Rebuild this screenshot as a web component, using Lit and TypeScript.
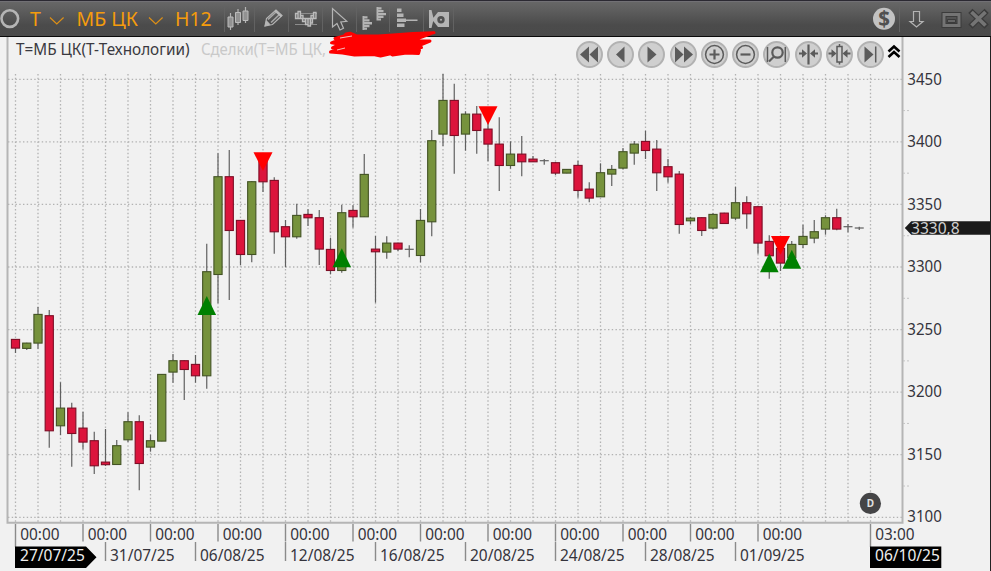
import { LitElement, html, svg, css } from "lit";
import { customElement } from "lit/decorators.js";

// One candle: direction (u = up, d = down, n = flat), high, body top, body bottom, low
type Candle = [string, number, number, number, number];

const FIRST_X = 15.5;
const STEP = 11.25;

const candles: Candle[] = [
  ["d", 339, 339, 348.3, 353], ["u", 342.7, 342.7, 348.6, 350], ["u", 307, 314, 343.3, 348.7],
  ["d", 310, 315.3, 431, 447.7], ["u", 382.3, 407.7, 426, 435], ["d", 402.7, 407.7, 433.7, 466.7],
  ["d", 411.7, 427.7, 442.3, 449.3], ["d", 431.7, 440.3, 466, 474], ["d", 429, 461.7, 464.9, 466],
  ["u", 440, 445.3, 464.7, 464.7], ["u", 412.3, 421.3, 440, 442], ["d", 415.3, 421.3, 463.7, 490.3],
  ["u", 434.7, 440.3, 447.3, 451.7], ["u", 374, 374, 441.3, 441.3], ["u", 354, 360.3, 372.3, 382.7],
  ["d", 360.3, 360.3, 369.7, 400], ["d", 355, 364, 376, 382.7], ["u", 243.7, 271.3, 376, 388.7],
  ["u", 153.3, 176.3, 274.7, 303.3], ["d", 150, 176.3, 230.7, 300], ["d", 220, 220, 254.7, 265],
  ["u", 181.3, 181.3, 254.7, 262.3], ["d", 153, 155, 182, 192], ["d", 177.3, 180, 232, 253.7],
  ["d", 220, 226.3, 237, 267.3], ["u", 203.7, 215, 237, 238.7], ["d", 209.3, 214, 218, 226],
  ["d", 210, 217.3, 249.3, 265], ["d", 237.7, 249, 270.7, 274.3], ["u", 204.7, 212.3, 270.7, 272.7],
  ["d", 205.3, 210, 217, 227.7], ["u", 154, 174, 217, 217], ["d", 236, 248.7, 252, 302.7],
  ["u", 236.3, 242.7, 252.3, 258.7], ["d", 242.7, 242.7, 249.3, 251], ["n", 245.3, 249.3, 249.3, 257.3],
  ["u", 209, 220, 255.7, 262.3], ["u", 130, 140.3, 222, 236.3], ["u", 73.7, 100, 134.3, 146],
  ["d", 83.7, 100, 135.7, 173.7], ["u", 111.3, 113.7, 134.3, 150.7], ["d", 106, 113.7, 130.7, 153.7],
  ["d", 123, 128.7, 144.3, 161.3], ["d", 117.3, 143.7, 165.7, 191], ["u", 141.3, 153.7, 165.7, 168.7],
  ["d", 136, 153.7, 162, 176.3], ["d", 156, 158.7, 162, 162], ["n", 159, 160.7, 160.7, 164.7],
  ["d", 162, 162.3, 173.3, 175], ["u", 169, 169, 173.3, 173.3], ["d", 160.7, 165, 190.7, 197.7],
  ["d", 182.3, 188.7, 198.3, 202.3], ["u", 163.3, 172.3, 197, 197], ["u", 165, 169, 174.3, 186],
  ["u", 148, 151.3, 168.3, 169.5], ["u", 141, 143.7, 153.3, 164.7], ["d", 130.7, 141, 150.7, 159],
  ["d", 140, 148.7, 173, 191], ["d", 159, 166.3, 177, 182.7], ["d", 171, 173.7, 224.7, 233.7],
  ["u", 217, 217.7, 221, 224], ["d", 217.3, 217.3, 230.7, 236], ["u", 213.3, 214, 228.3, 229.5],
  ["d", 212.7, 212.7, 223.7, 223.7], ["u", 186.7, 202.3, 218.3, 220], ["d", 196.3, 202.3, 214, 228.7],
  ["d", 206.3, 206.3, 243.3, 253.7], ["d", 235.3, 241, 256, 278.7], ["d", 246, 248, 263.3, 271],
  ["u", 241, 244, 258, 262], ["u", 224.7, 236, 244.7, 248.3], ["u", 220, 231.3, 238.3, 243.3],
  ["u", 215.3, 217.3, 229.3, 234.7], ["d", 208.7, 217.3, 229.3, 230.3], ["n", 224, 226.7, 226.7, 232.3],
  ["n", 226.7, 228, 228, 230],
];

const sells = [[263, 152.3], [488, 106.3], [780.5, 236]];
const buys = [[206.8, 315], [341.8, 267.3], [769.3, 272.3], [791.8, 268.7]];
const prices = [3450, 3400, 3350, 3300, 3250, 3200, 3150, 3100];
const hourTicks = [0, 6, 12, 18, 24, 30, 36, 42, 48, 54, 60, 66];
const dates: [number, string][] = [
  [8, "31/07/25"], [16, "06/08/25"], [24, "12/08/25"], [32, "16/08/25"],
  [40, "20/08/25"], [48, "24/08/25"], [56, "28/08/25"], [64, "01/09/25"],
];

const xAt = (i: number) => FIRST_X + STEP * i;
const priceY = (i: number) => 79.3 + 62.57 * i;

@customElement("tool-bar")
class ToolBar extends LitElement {
  static styles = css`
    :host { display: block; height: 37px; }
    .bar {
      box-sizing: border-box; height: 37px; display: flex; align-items: stretch;
      border-top: 1px solid #2b2932; border-bottom: 1px solid #0a0a0a;
      background: linear-gradient(#77757c 0, #666 1.5px, #5f5f5f 8px, #4b4b4b 24px, #4a4a4a 100%);
      font: 19.5px "Noto Sans", sans-serif; color: #f59c0c;
    }
    .cell { box-sizing: border-box; flex: none; display: flex; }
    .cell svg { display: block; flex: none; }
    .sep { flex: none; width: 1px; height: 26px; margin-top: 5px; background: #626262; }
    .label { line-height: 35px; white-space: pre; }
    .circle { width: 30px; } .t { width: 18px; } .chev { width: 28.5px; }
    .name { width: 71.5px; } .chev2 { width: 27px; } .period { width: 49px; }
    .grow { flex: 1; }
    .chevline { fill: none; stroke: #dc8f17; stroke-width: 1.2; }
    .g { fill: #b4b4b4; } .dim { fill: #929292; stroke: #bcbcbc; stroke-width: 1; }
    .line { fill: none; stroke: #b4b4b4; stroke-width: 1.2; }
    .soft { fill: none; stroke: #8c8c8c; stroke-width: 1; }
    .dark { fill: #505050; }
    .win { fill: none; stroke: #747474; stroke-width: 3; }
    .cross { fill: none; stroke: #747474; stroke-width: 3.8; }
    .edge { fill: none; stroke: #3b3b3b; stroke-width: 5; }
    .cross-edge { fill: none; stroke: #3b3b3b; stroke-width: 6; stroke-linecap: square; }
    .dollar { fill: #505050; font: bold 20.5px "Noto Sans", sans-serif; text-anchor: middle; }
  `;
  // Each icon is drawn in bar coordinates through a window starting at x
  icon(x: number, w: number, body: unknown) {
    return html`<svg width=${w} height="35" viewBox="${x} 1 ${w} 35">${body}</svg>`;
  }
  render() {
    return html`<div class="bar">
      <div class="cell circle">${this.icon(0, 30, svg`<circle cx="9.8" cy="18.6" r="8.3" fill="none" stroke="#b5b5b5" stroke-width="2.6"/>`)}</div>
      <div class="cell t"><span class="label">T</span></div>
      <div class="cell chev">${this.icon(48, 28.5, svg`<path class="chevline" d="M50 17.5l6.8 6.5 6.8-6.5"/>`)}</div>
      <div class="cell name"><span class="label">МБ ЦК</span></div>
      <div class="cell chev2">${this.icon(148, 27, svg`<path class="chevline" d="M149 17.5l6.8 6.5 6.8-6.5"/>`)}</div>
      <div class="cell period"><span class="label">H12</span></div>
      <i class="sep"></i>
      ${this.icon(225, 29, svg`<path class="line" d="M230.5 13v17M238 9v16M245.5 7v16"/>
        <path class="dim" d="M228 17h5v10h-5zM235.5 12.5h5v10h-5zM243 11h5v9.500h-5z"/>`)}
      <i class="sep"></i>
      ${this.icon(255, 33, svg`<path class="line" d="M265 26l1.500-7.500 9.500-8.500 6 5.500-9.500 9z" fill="#777"/>
        <path d="M268 19.500l8.500-8M271 22.500l8.500-8" stroke="#a8a8a8" stroke-width="1.600"/><path d="M275 10.500l6.500 6" stroke="#b8b8b8" stroke-width="2"/><path class="g" d="M264.500 26.500l1.800-6.500 4.200 4.500z"/>`)}
      <i class="sep"></i>
      ${this.icon(289, 33, svg`<path class="soft" d="M295 13.500h22M295 24.500h22"/>
        <path fill="#777" stroke="#bcbcbc" stroke-width="1.300" d="M295.500 18.500v-5h2.500v-2h2.500v4h2.500v3h8v-3h2.500v-3h2.500v6zM302.500 18.500v3h3v3h2.500v1.500h2.500v-3h2v-4.500M298 13v5M300.500 15v3M305.500 18.500v3M308 18.500v5M310.500 18.500v4M313.500 13v5"/>`)}
      <i class="sep"></i>
      ${this.icon(323, 32.5, svg`<path class="line" d="M332.500 8.500V27l4.500-3.500 3 6.500 3.500-1.800-2.700-6.200 6-.7z"/>`)}
      <i class="sep"></i>
      ${this.icon(356.5, 32.5, svg`<path class="g" d="M362 16h1.800v14H362zM363 16.300h4v2.300h-4zM363 19.200h6v2.300h-6zM363 22.100h8.500v2.300H363zM363 25h6v2.300h-6zM363 27.800h3.500v2h-3.500zM376 7h1.800v13.500H376zM377 7.300h4v2.200h-4zM377 10.100h6v2.200h-6zM377 13h8.500v2.200H377zM377 15.800h6V18h-6zM377 18.500h3.500v2H377z"/>`)}
      <i class="sep"></i>
      ${this.icon(390, 33, svg`<path class="g" d="M397 8.500h4.500v3.500H397zM397 13.500h6.500V17H397zM397 18.500h9v3.500h-9zM406 19.500h11.500V21H406zM397 23.500h7.500V27H397z"/>`)}
      <i class="sep"></i>
      ${this.icon(424, 29, svg`<path class="g" d="M429 10h2.500l2.200 9-2.200 9H429zM438 12h11v15h-11l-6-7.500z"/><circle class="dark" cx="441" cy="19.700" r="3.700"/><circle class="g" cx="441" cy="19.700" r="1"/>`)}
      <i class="sep"></i>
      <div class="grow"></div>
      ${this.icon(870, 29, svg`<circle cx="884" cy="18.700" r="11" fill="#c2c2c2"/><text class="dollar" x="884" y="26">$</text>`)}
      <i class="sep"></i>
      ${this.icon(900, 91, svg`<path class="line" d="M913.500 11.500h6v10h3.500l-6.500 5.500-6.500-5.500h3.500z"/>
        <path class="edge" d="M944 14.500h15v11h-15z"/><path class="win" d="M944 14.500h15v11h-15z"/><path d="M947.500 19.500h8v3h-8z" fill="#666" stroke="#3b3b3b"/>
        <path class="cross-edge" d="M972.500 13l12 11.500M984.500 13L972.500 24.500"/><path class="cross" d="M971.500 12l14 13.500M985.500 12L971.500 25.500"/>`)}
    </div>`;
  }
}

@customElement("nav-buttons")
class NavButtons extends LitElement {
  static styles = css`
    :host { display: flex; align-items: center; gap: 4.25px; }
    .btn { width: 27px; height: 27px; flex: none; display: block; }
    .disc { fill: #cfcfcf; stroke: #b2b2b2; stroke-width: 2; }
    .solid { fill: #5b5b5b; } .line { fill: none; stroke: #5b5b5b; stroke-width: 1.5; }
    .thick { fill: none; stroke: #5b5b5b; stroke-width: 2.2; }
    .up { display: block; margin-left: -1.5px; margin-top: -6px; }
    .chev { fill: none; stroke: #000; stroke-width: 2.6; }
  `;
  glyphs = [
    svg`<path class="solid" d="M13 5.500v16L4 13.500zM22 5.500v16L13.500 13.500z"/>`,
    svg`<path class="solid" d="M17.500 5.500v16L9 13.500z"/>`,
    svg`<path class="solid" d="M9.500 5.500v16L18.500 13.500z"/>`,
    svg`<path class="solid" d="M5 5.500v16L13.500 13.500zM14 5.500v16L23 13.500z"/>`,
    svg`<circle class="line" cx="13.500" cy="13.500" r="8.900"/><path class="thick" d="M8.500 13.500h10M13.500 8.500v10"/>`,
    svg`<circle class="line" cx="13.500" cy="13.500" r="8.900"/><path class="thick" d="M8.500 13.500h10"/>`,
    svg`<circle class="thick" cx="14.500" cy="11.500" r="5.200"/><path class="thick" d="M11 15.500l-5 5"/><path class="line" d="M4.500 6v15M22.300 6v15"/>`,
    svg`<path class="thick" d="M13.500 3.500v20"/><path class="thick" d="M4 12.500h4M23 12.500h-4"/><path class="solid" d="M7 8.200l5 4.300-5 4.300zM20 8.200l-5 4.300 5 4.300z"/>`,
    svg`<path class="line" fill="#aaa" d="M11 5.500h5v15.500h-5zM13.500 3v2.500M13.500 21v2.500"/><path class="thick" d="M2.500 12.500h4M24.500 12.500h-4"/><path class="solid" d="M5.500 8.200l5 4.300-5 4.300zM21.500 8.200l-5 4.300 5 4.300z"/>`,
    svg`<path class="solid" d="M7.500 5.500v16L16.500 13.500z"/><path class="line" d="M18.700 5.500v16"/>`,
  ];
  render() {
    return html`${this.glyphs.map((g) => html`<svg class="btn" viewBox="0 0 27 27"><circle class="disc" cx="13.500" cy="13.500" r="12.500"/>${g}</svg>`)}
      <svg class="up" width="14" height="14" viewBox="0 0 14 14"><path class="chev" d="M1.500 7.500L7 2.500l5.500 5M1.500 13L7 8l5.500 5"/></svg>`;
  }
}

@customElement("candle-chart")
class CandleChart extends LitElement {
  static styles = css`
    :host { display: block; }
    svg { display: block; font: 15.6px "Noto Sans", sans-serif; }
    text { fill: #35343c; }
    .grid { stroke: #b2b2b2; stroke-width: 1.3; stroke-dasharray: 1.400 2.350; }
    .frame { fill: none; stroke: #b5b5b5; stroke-width: 2; }
    .tick { stroke: #8b8b8b; stroke-width: 1.4; }
    .minor { stroke: #c4c4c4; stroke-dasharray: 2 2; }
    .wick { stroke: #606060; stroke-width: 1.200; }
    .body { stroke-width: 1.1; }
    .u { fill: #76923c; stroke: #435324; }
    .d { fill: #dc143c; stroke: #7d0d25; }
    .sell { fill: #f00; } .buy { fill: #008000; }
    .black { fill: #000; } .tag { fill: #1a1a1a; }
    .light { fill: #eee; } .quote { fill: #d0d0d0; }
    .badge { fill: #444446; }
    .badge-text { fill: #e0e0e0; font: bold 10px "Noto Sans", sans-serif; text-anchor: middle; }
  `;
  label(x: number, y: number, width: number, text: string, tone = "") {
    return svg`<text class=${tone} x=${x} y=${y} textLength=${width} lengthAdjust="spacingAndGlyphs">${text}</text>`;
  }
  render() {
    const dash = (d: string) => svg`<path class="grid" d=${d}/>`;
    return html`<svg width="991" height="534" viewBox="0 37 991 534">
      ${Array.from({ length: 39 }, (_, i) => dash(`M${xAt(i * 2)} 74V522`))}
      ${prices.map((_, i) => dash(`M8 ${priceY(i)}H902`))}
      <path class="frame" d="M7.500 37V522.700H902.500V37"/>
      ${prices.slice(1).map((_, i) => svg`<path class="minor" d="M903 ${priceY(i) + 31.300}h6"/>`)}
      ${prices.map((p, i) => this.label(907.3, priceY(i) + 5.2, 34.5, String(p)))}
      ${candles.map(([kind, high, top, bottom, low], i) => svg`
        <path class="wick" d="M${xAt(i)} ${high}V${low}"/>
        ${kind === "n"
          ? svg`<path class="wick" d="M${xAt(i) - 4.500} ${top}h9"/>`
          : svg`<rect class="body ${kind}" x=${xAt(i) - 4.100} y=${top + 0.400} width="8.200" height=${Math.max(bottom - top - 0.600, 1.500)}/>`}`)}
      ${sells.map(([x, y]) => svg`<path class="sell" d="M${x - 9.500} ${y}h19l-9.500 18.700z"/>`)}
      ${buys.map(([x, y]) => svg`<path class="buy" d="M${x - 9.300} ${y}h18.600l-9.300-19z"/>`)}
      <circle class="badge" cx="870.400" cy="503.400" r="10.600"/><text class="badge-text" x="870.400" y="507.300">D</text>
      <path class="tag" d="M904.800 228l6.500-6.700H990v13.500h-78.700z"/>${this.label(911, 233.8, 48.7, "3330,8", "quote")}
      ${hourTicks.map((i) => svg`<path class="tick" d="M${xAt(i)} 524V${i ? 541.500 : 547}"/>${this.label(xAt(i) + 4.7, 540.2, 39.3, "00:00")}`)}
      <path class="tick" d="M870.500 524V547"/>${this.label(875.2, 540.2, 39.3, "03:00")}
      ${dates.map(([i, text]) => svg`<path class="tick" d="M${xAt(i)} 542V561"/>${this.label(xAt(i) + 4.5, 561.2, 64.5, text)}`)}
      <path class="black" d="M15 546.500h71l10.500 10.700L86 568H15zM870 546.500h71.300V568H870z"/>
      ${this.label(20, 561.2, 64.8, "27/07/25", "light")}${this.label(875, 561.2, 64.8, "06/10/25", "light")}
      <path d="M990.500 37V571" stroke="#222"/>
    </svg>`;
  }
}

@customElement("app-root")
class AppRoot extends LitElement {
  static styles = css`
    :host { display: block; width: 991px; height: 571px; overflow: hidden; background: #f1f1f1; position: relative; }
    .legend, .scribble, .nav { position: absolute; }
    .legend { left: 0; top: 37px; font: 15.600px "Noto Sans", sans-serif; }
    .main { fill: #3a3940; } .pale { fill: #c9c9c9; }
    .nav { left: 575.800px; top: 40.700px; }
    .scribble { left: 325px; top: 28px; }
    .ink { fill: #f00; stroke: #f00; stroke-width: 3; stroke-linejoin: round; stroke-linecap: round; }
    .gap { stroke: #f1f1f1; stroke-width: 0.800; }
  `;
  render() {
    return html`<tool-bar></tool-bar>
      <candle-chart></candle-chart>
      <svg class="legend" width="330" height="26">
        <text class="main" x="16" y="17.800" textLength="173.500" lengthAdjust="spacingAndGlyphs">T=МБ ЦК(T-Технологии)</text>
        <text class="pale" x="201" y="17.800" textLength="125" lengthAdjust="spacingAndGlyphs">Сделки(T=МБ ЦК,</text>
      </svg>
      <nav-buttons class="nav"></nav-buttons>
      <svg class="scribble" width="116" height="32" viewBox="325 28 116 32">
        <path class="ink" d="M335 38.500l9-2.500 2-2 4-.8 6 2.500 22 .3 15-1 20-1.500 21-.8-15 5.500-4 2.500 15 .3-11 4.500 2.500 2-9 1 7 1.500-1 3.500-12-.5-14 2-2-1.200-10 2.200-7-1.500-19 .5-12-2-12-1 9-3.500-7-.7 7-3.500-8-1.500 6-2.500z"/>
        <path class="gap" d="M340 38l12-2M345 48l-8 2"/>
      </svg>`;
  }
}
